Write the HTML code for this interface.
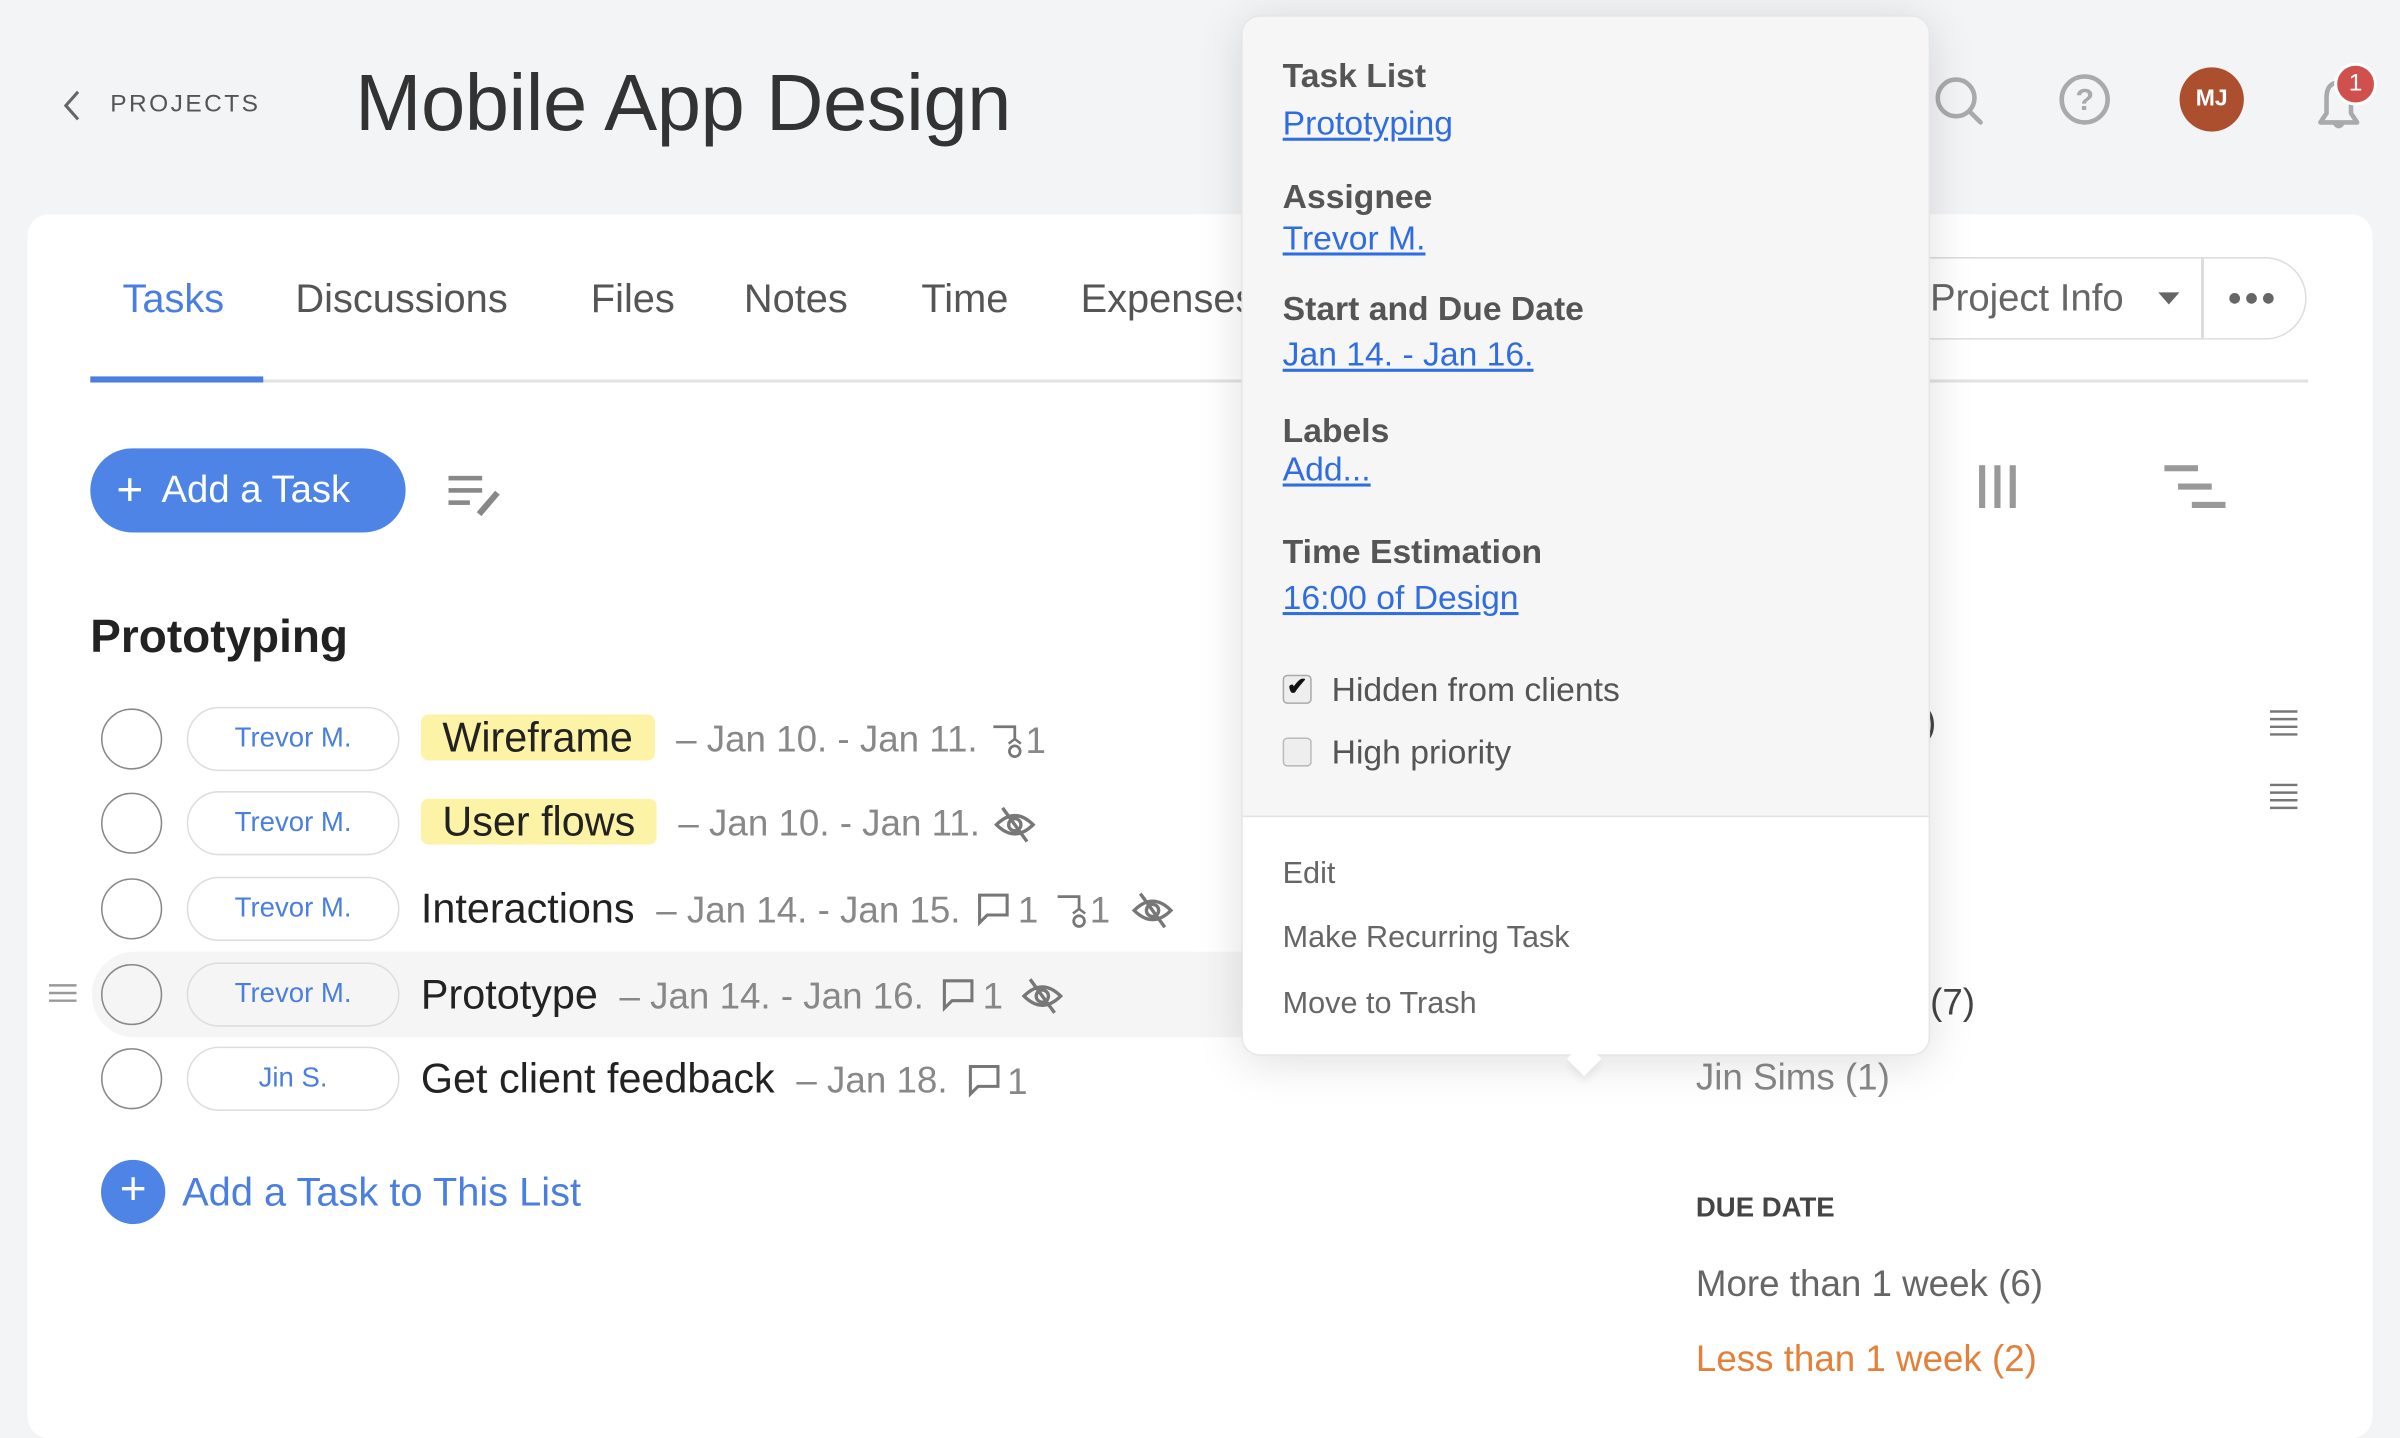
<!DOCTYPE html>
<html><head><meta charset="utf-8"><style>
html,body{margin:0;padding:0;width:2400px;height:1400px;overflow:hidden;background:#f3f4f6;}
#s{position:absolute;left:0;top:0;width:1568px;height:915px;transform:scale(1.5306,1.5301);transform-origin:0 0;font-family:"Liberation Sans",sans-serif;}
.a{position:absolute;white-space:nowrap;}
.card{position:absolute;left:18px;top:140px;width:1532px;height:800px;background:#fff;border-radius:14px;}
.tab{position:absolute;top:180px;font-size:26px;color:#555;}
.circ{position:absolute;left:66px;width:40px;height:40px;border:1.5px solid #888;border-radius:50%;box-sizing:border-box;}
.pill{position:absolute;left:122px;width:139px;height:42px;border:1.5px solid #ddd;border-radius:21px;box-sizing:border-box;color:#4a7fe0;font-size:18px;text-align:center;line-height:39px;}
.tt{position:absolute;left:275px;font-size:27px;color:#222;white-space:nowrap;}
.d{color:#888;font-size:24px;}
.lab{position:absolute;left:838px;font-size:21px;font-weight:bold;color:#555;}
.lnk{position:absolute;left:838px;font-size:22px;color:#2f6de0;text-decoration:underline;}
.mi{position:absolute;left:838px;font-size:20px;color:#666;}
.hl{background:#fdf3a7;border-radius:5px;padding:0 14px;}
</style></head><body><div id="s">
<svg class="a" style="left:40px;top:58px" width="14" height="22"><path d="M11 2 L3 11 L11 20" stroke="#666" stroke-width="2" fill="none"/></svg>
<div class="a" style="left:72px;top:60px;font-size:16px;letter-spacing:1.6px;color:#555">PROJECTS</div>
<div class="a" style="left:232px;top:38px;font-size:52px;color:#333;letter-spacing:-0.3px">Mobile App Design</div>

<svg class="a" style="left:1262px;top:48px" width="36" height="36"><circle cx="16" cy="16" r="12" stroke="#aaa" stroke-width="3" fill="none"/><path d="M25 25 L32 32" stroke="#aaa" stroke-width="3" stroke-linecap="round"/></svg>
<svg class="a" style="left:1343px;top:46px" width="38" height="38"><circle cx="19" cy="19" r="15" stroke="#aaa" stroke-width="3" fill="none"/><text x="19" y="26" text-anchor="middle" font-family="Liberation Sans" font-weight="bold" font-size="20" fill="#aaa">?</text></svg>
<div class="a" style="left:1424px;top:44px;width:42px;height:42px;border-radius:50%;background:#ac4f2f;color:#fff;font-size:15px;font-weight:bold;text-align:center;line-height:42px">MJ</div>
<svg class="a" style="left:1508px;top:44px" width="44" height="44"><path d="M8 36 L12 30 L12 20 Q12 10 20 10 Q28 10 28 20 L28 30 L32 36 Z" stroke="#aaa" stroke-width="3" fill="none" stroke-linejoin="round"/><path d="M16 37 Q20 43 24 37" fill="#aaa"/></svg>
<div class="a" style="left:1525px;top:41px;width:24px;height:24px;border-radius:50%;background:#d0504d;border:2px solid #fff;color:#fff;font-size:16px;text-align:center;line-height:24px">1</div>

<div class="card"></div>
<div class="tab" style="left:80px;color:#4a7fe0">Tasks</div>
<div class="tab" style="left:193px">Discussions</div>
<div class="tab" style="left:386px">Files</div>
<div class="tab" style="left:486px">Notes</div>
<div class="tab" style="left:602px">Time</div>
<div class="tab" style="left:706px">Expenses</div>
<div class="a" style="left:59px;top:248px;width:1449px;height:2px;background:#e2e2e2"></div>
<div class="a" style="left:59px;top:246px;width:113px;height:4px;background:#4a7fe0"></div>

<div class="a" style="left:1100px;top:168px;width:407px;height:54px;border:1.5px solid #ddd;border-radius:27px;box-sizing:border-box"></div>
<div class="a" style="left:1261px;top:181px;font-size:25px;color:#666">Project Info</div>
<svg class="a" style="left:1410px;top:191px" width="14" height="10"><path d="M0 0 L14 0 L7 8 Z" fill="#666"/></svg>
<div class="a" style="left:1438px;top:169px;width:1.5px;height:52px;background:#ddd"></div>
<svg class="a" style="left:1455px;top:189px" width="34" height="12"><circle cx="5" cy="6" r="3.5" fill="#666"/><circle cx="16" cy="6" r="3.5" fill="#666"/><circle cx="27" cy="6" r="3.5" fill="#666"/></svg>

<div class="a" style="left:59px;top:293px;width:206px;height:55px;border-radius:28px;background:#4d84e6;color:#fff;font-size:25px;line-height:55px"><span style="margin-left:17px;font-size:30px;vertical-align:-2px">+</span><span style="margin-left:12px">Add a Task</span></div>
<svg class="a" style="left:293px;top:310px" width="40" height="28"><rect x="0" y="1" width="22" height="3" fill="#888"/><rect x="0" y="9" width="22" height="3" fill="#888"/><rect x="0" y="17" width="14" height="3" fill="#888"/><path d="M20 26 L32 12" stroke="#888" stroke-width="4"/></svg>

<div class="a" style="left:59px;top:400px;font-size:30px;font-weight:bold;color:#222">Prototyping</div>

<div class="a" style="left:60px;top:622px;width:760px;height:56px;background:#f5f5f5;border-radius:28px 0 0 28px"></div>
<svg class="a" style="left:32px;top:642px" width="18" height="16"><path d="M0 2H18M0 7H18M0 12H18" stroke="#999" stroke-width="1.6"/></svg>

<div class="circ" style="top:463px"></div><div class="pill" style="top:462px">Trevor M.</div>
<div class="tt" style="top:467px"><span class="hl">Wireframe</span> <span class="d">&nbsp;– Jan 10. - Jan 11.</span></div>
<svg class="a" style="left:648px;top:473px" width="20" height="24"><path d="M1 2H15V10" stroke="#777" stroke-width="1.8" fill="none"/><path d="M15 10 L11 13 M15 10 L19 13" stroke="#777" stroke-width="1.6"/><circle cx="15" cy="18" r="3.5" stroke="#777" stroke-width="1.8" fill="none"/></svg>
<div class="a d" style="left:670px;top:471px">1</div>
<div class="circ" style="top:518px"></div><div class="pill" style="top:517px">Trevor M.</div>
<div class="tt" style="top:522px"><span class="hl">User flows</span> <span class="d">&nbsp;– Jan 10. - Jan 11.</span></div>
<svg class="a" style="left:648px;top:526px" width="30" height="26"><path d="M3 13 Q15 1 27 13 Q15 25 3 13 Z" stroke="#777" stroke-width="2.2" fill="none"/><circle cx="15" cy="13" r="4" stroke="#777" stroke-width="2.2" fill="none"/><path d="M7 2 L23 24" stroke="#777" stroke-width="2.2"/></svg>
<div class="circ" style="top:574px"></div><div class="pill" style="top:573px">Trevor M.</div>
<div class="tt" style="top:579px">Interactions <span class="d">&nbsp;– Jan 14. - Jan 15.</span></div>
<svg class="a" style="left:638px;top:583px" width="24" height="24"><path d="M2 2H20V15H7L2 20Z" stroke="#777" stroke-width="2" fill="none"/></svg>
<div class="a d" style="left:665px;top:582px">1</div>
<svg class="a" style="left:690px;top:584px" width="20" height="24"><path d="M1 2H15V10" stroke="#777" stroke-width="1.8" fill="none"/><path d="M15 10 L11 13 M15 10 L19 13" stroke="#777" stroke-width="1.6"/><circle cx="15" cy="18" r="3.5" stroke="#777" stroke-width="1.8" fill="none"/></svg>
<div class="a d" style="left:712px;top:582px">1</div>
<svg class="a" style="left:738px;top:582px" width="30" height="26"><path d="M3 13 Q15 1 27 13 Q15 25 3 13 Z" stroke="#777" stroke-width="2.2" fill="none"/><circle cx="15" cy="13" r="4" stroke="#777" stroke-width="2.2" fill="none"/><path d="M7 2 L23 24" stroke="#777" stroke-width="2.2"/></svg>
<div class="circ" style="top:630px"></div><div class="pill" style="top:629px">Trevor M.</div>
<div class="tt" style="top:635px">Prototype <span class="d">&nbsp;– Jan 14. - Jan 16.</span></div>
<svg class="a" style="left:615px;top:639px" width="24" height="24"><path d="M2 2H20V15H7L2 20Z" stroke="#777" stroke-width="2" fill="none"/></svg>
<div class="a d" style="left:642px;top:638px">1</div>
<svg class="a" style="left:666px;top:638px" width="30" height="26"><path d="M3 13 Q15 1 27 13 Q15 25 3 13 Z" stroke="#777" stroke-width="2.2" fill="none"/><circle cx="15" cy="13" r="4" stroke="#777" stroke-width="2.2" fill="none"/><path d="M7 2 L23 24" stroke="#777" stroke-width="2.2"/></svg>
<div class="circ" style="top:685px"></div><div class="pill" style="top:684px">Jin S.</div>
<div class="tt" style="top:690px">Get client feedback <span class="d">&nbsp;– Jan 18.</span></div>
<svg class="a" style="left:632px;top:695px" width="24" height="24"><path d="M2 2H20V15H7L2 20Z" stroke="#777" stroke-width="2" fill="none"/></svg>
<div class="a d" style="left:658px;top:694px">1</div>

<div class="a" style="left:66px;top:758px;width:42px;height:42px;border-radius:50%;background:#4d84e6;color:#fff;font-size:30px;text-align:center;line-height:40px">+</div>
<div class="a" style="left:119px;top:764px;font-size:26px;color:#4a7fe0">Add a Task to This List</div>

<svg class="a" style="left:1292px;top:304px" width="30" height="30"><rect x="1" y="0" width="4" height="28" fill="#999"/><rect x="11" y="0" width="4" height="28" fill="#999"/><rect x="21" y="0" width="4" height="28" fill="#999"/></svg>
<svg class="a" style="left:1414px;top:304px" width="42" height="30"><rect x="0" y="0" width="22" height="4" fill="#999"/><rect x="9" y="12" width="22" height="4" fill="#999"/><rect x="18" y="24" width="22" height="4" fill="#999"/></svg>
<div class="a" style="left:1257px;top:459px;font-size:24px;color:#444">)</div>
<svg class="a" style="left:1483px;top:464px" width="20" height="18"><path d="M0 1H18M0 6H18M0 11H18M0 16H18" stroke="#777" stroke-width="1.6"/></svg>
<svg class="a" style="left:1483px;top:512px" width="20" height="18"><path d="M0 1H18M0 6H18M0 11H18M0 16H18" stroke="#777" stroke-width="1.6"/></svg>
<div class="a" style="left:1261px;top:642px;font-size:24px;color:#444">(7)</div>
<div class="a" style="left:1108px;top:691px;font-size:24px;color:#888">Jin Sims (1)</div>
<div class="a" style="left:1108px;top:779px;font-size:18px;font-weight:bold;color:#444">DUE DATE</div>
<div class="a" style="left:1108px;top:826px;font-size:24px;color:#666">More than 1 week (6)</div>
<div class="a" style="left:1108px;top:875px;font-size:24px;color:#e3813b">Less than 1 week (2)</div>

<div class="a" style="left:811px;top:10px;width:450px;height:680px;border-radius:12px;background:#fff;box-shadow:0 4px 30px rgba(0,0,0,0.13);overflow:hidden;border:1px solid #e6e6e6;box-sizing:border-box">
<div style="height:522px;background:#f6f6f6;border-bottom:1.5px solid #e2e2e2"></div></div>
<div class="a" style="left:1027px;top:684px;width:16px;height:16px;background:#fff;transform:rotate(45deg);box-shadow:3px 3px 5px rgba(0,0,0,0.06)"></div>
<div class="lab" style="top:37px;font-size:22px">Task List</div><div class="lnk" style="top:68px">Prototyping</div>
<div class="lab" style="top:116px;font-size:22px">Assignee</div><div class="lnk" style="top:143px">Trevor M.</div>
<div class="lab" style="top:189px;font-size:22px">Start and Due Date</div><div class="lnk" style="top:219px">Jan 14. - Jan 16.</div>
<div class="lab" style="top:269px;font-size:22px">Labels</div><div class="lnk" style="top:294px">Add...</div>
<div class="lab" style="top:348px;font-size:22px">Time Estimation</div><div class="lnk" style="top:378px">16:00 of Design</div>
<div class="a" style="left:838px;top:441px;width:19px;height:19px;border:1.5px solid #aaa;border-radius:3px;box-sizing:border-box;background:#eee;font-size:16px;line-height:16px;text-align:center;color:#111;font-weight:bold">✔</div>
<div class="a" style="left:870px;top:438px;font-size:22px;color:#555">Hidden from clients</div>
<div class="a" style="left:838px;top:482px;width:19px;height:19px;border:1.5px solid #bbb;border-radius:3px;box-sizing:border-box;background:#eee"></div>
<div class="a" style="left:870px;top:479px;font-size:22px;color:#555">High priority</div>
<div class="mi" style="top:560px">Edit</div>
<div class="mi" style="top:602px">Make Recurring Task</div>
<div class="mi" style="top:645px">Move to Trash</div>
</div></body></html>
